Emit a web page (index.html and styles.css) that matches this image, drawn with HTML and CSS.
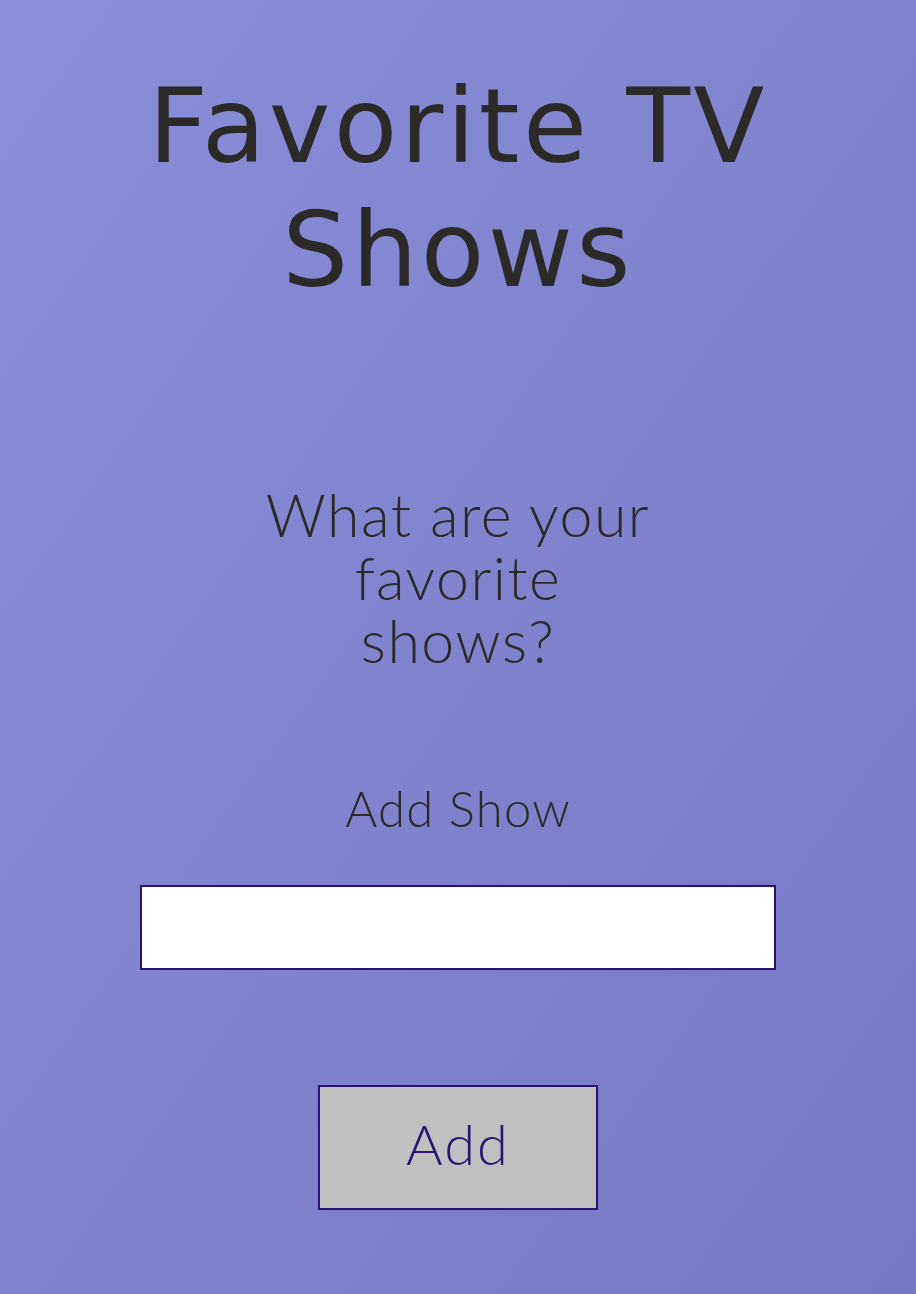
FILE: index.html
```
<!DOCTYPE html>
<html lang="en">
<head>
<meta charset="utf-8">
<title>Favorite TV Shows</title>
<link rel="stylesheet" href="styles.css">
</head>
<body>
<main class="page">
  <h1 class="title">Favorite TV Shows</h1>
  <h2 class="question">What are your favorite shows?</h2>
  <form class="show-form">
    <label class="label" for="show">Add Show</label>
    <input class="show-input" id="show" type="text">
    <button class="add-btn" type="button">Add</button>
  </form>
</main>
</body>
</html>
```
FILE: styles.css
```
html, body {
  margin: 0;
  padding: 0;
  height: 100%;
}
body {
  background: linear-gradient(to bottom right, #8a8fd9, #7777c3);
  color: #2c2a29;
  font-family: "Lato", "Liberation Sans", sans-serif;
}
.page {
  display: flex;
  flex-direction: column;
  align-items: center;
  padding-top: 64px;
}
.title {
  margin: 0;
  width: 700px;
  text-align: center;
  font-family: "DejaVu Sans", sans-serif;
  font-weight: normal;
  font-size: 104px;
  line-height: 124px;
  letter-spacing: 3.3px;
}
.question {
  margin: 171px 0 0;
  width: 400px;
  text-align: center;
  font-weight: 300;
  font-size: 59px;
  line-height: 63px;
  letter-spacing: 1.5px;
}
.show-form {
  display: flex;
  flex-direction: column;
  align-items: center;
  margin-top: 107px;
}
.label {
  font-weight: 300;
  font-size: 49px;
  line-height: 58px;
  letter-spacing: 1.2px;
}
.show-input {
  box-sizing: border-box;
  margin-top: 48px;
  width: 636px;
  height: 85px;
  border: 2px solid #2b1173;
  background: #fff;
  border-radius: 0;
  outline: none;
  font-size: 30px;
}
.add-btn {
  box-sizing: border-box;
  margin-top: 115px;
  width: 280px;
  height: 125px;
  border: 2px solid #2b1173;
  background: #c0c0c0;
  border-radius: 0;
  color: #2e1470;
  font-family: "Lato", sans-serif;
  font-weight: 300;
  font-size: 56px;
  letter-spacing: 2px;
  padding: 0 0 8px;
}
```
